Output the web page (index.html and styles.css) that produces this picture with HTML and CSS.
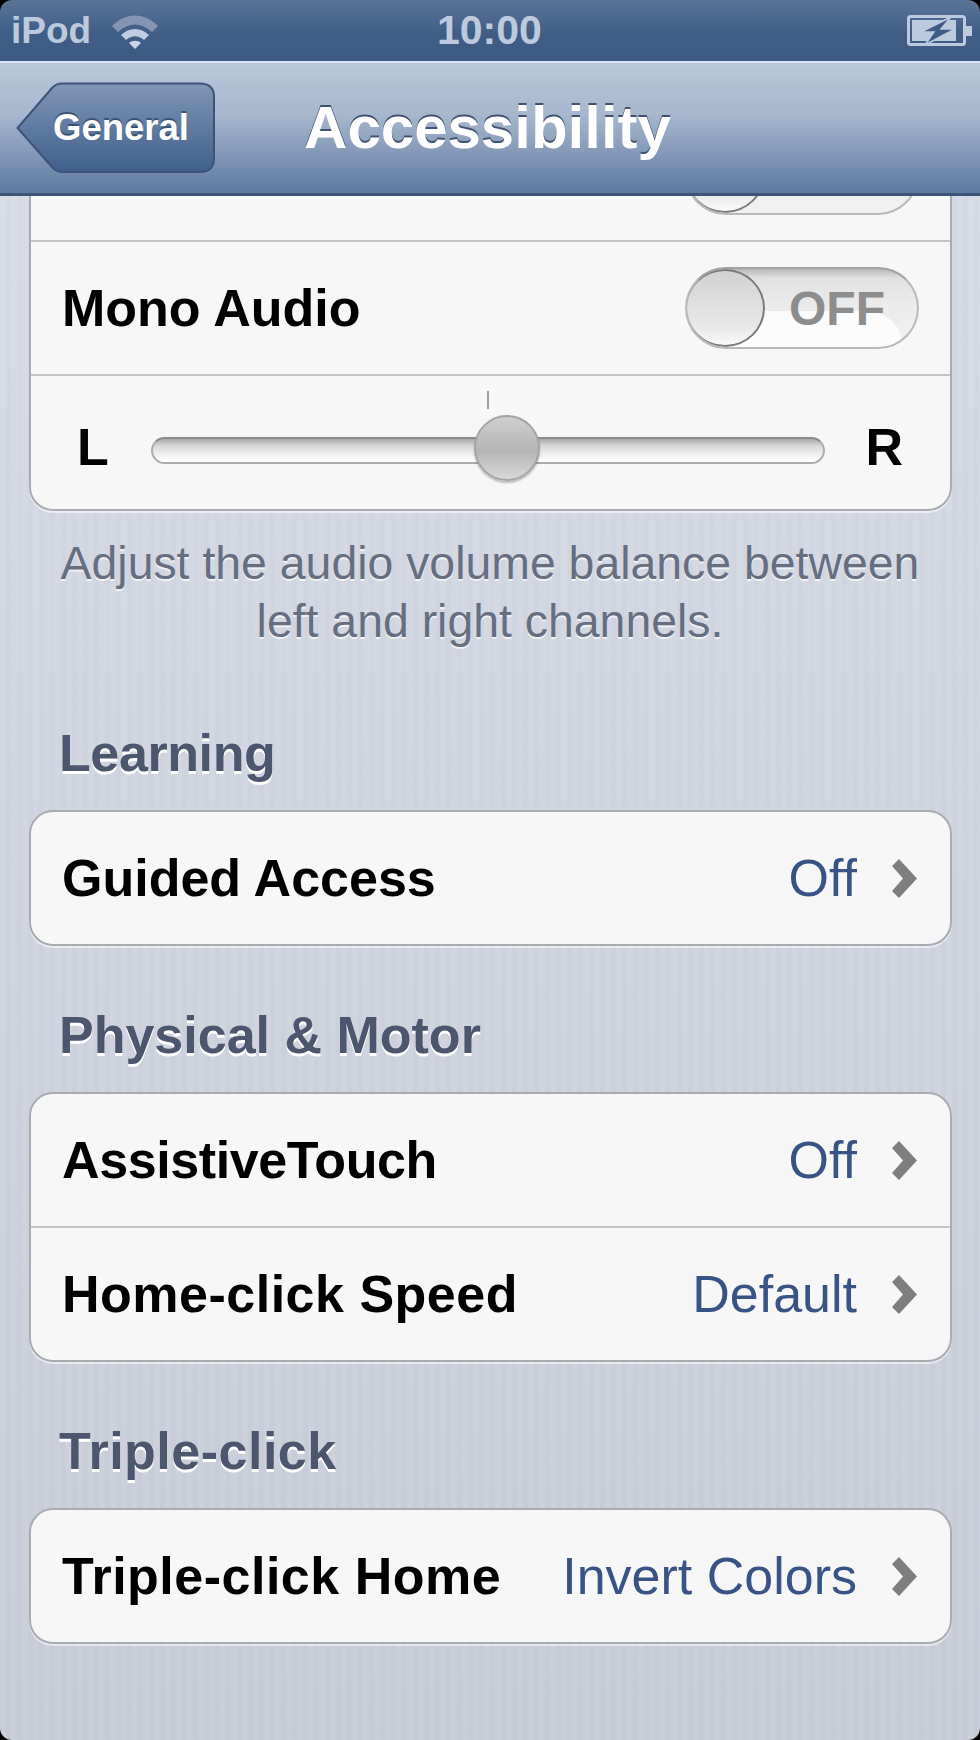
FILE: index.html
```html
<!DOCTYPE html>
<html lang="en">
<head>
    <meta charset="UTF-8">
    <title>Accessibility</title>
    <link rel="stylesheet" href="styles.css">
</head>
<body>
<div class="phone">
    <div class="status">
        <div class="status_left">
            <span class="carrier">iPod</span>
            <svg class="wifi" width="48" height="36" viewBox="0 0 48 36">
                <path d="M1 12 C14 -2 34 -2 47 12 L41 18 C30 8 18 8 7 18 Z" fill="#8295b1"/>
                <path d="M10 21 C18 13 30 13 38 21 L33 26 C27 21 21 21 15 26 Z" fill="#c0cce0"/>
                <path d="M18 29 C21 26 27 26 30 29 L24 35 Z" fill="#c9d4e6"/>
            </svg>
        </div>
        <span class="clock">10:00</span>
        <svg class="battery" width="66" height="32" viewBox="0 0 66 32">
            <rect x="1.5" y="1.5" width="56" height="28" rx="2" fill="none" stroke="#bccadd" stroke-width="3"/>
            <rect x="5" y="5" width="44" height="21" fill="#bccadd"/>
            <rect x="59" y="11" width="6" height="10" fill="#bccadd"/>
            <path d="M44 2 L14 17 L27 17 L18 30 L48 14 L34 14 Z" fill="#3f5c86" stroke="#bccadd" stroke-width="1.5"/>
        </svg>
    </div>

    <div class="navbar">
        <a class="back_btn" href="javascript:;">
            <svg class="back_shape" width="200" height="92" viewBox="0 0 200 92">
                <defs>
                    <linearGradient id="backFill" x1="0" y1="0" x2="0" y2="1">
                        <stop offset="0" stop-color="#8096b4"/>
                        <stop offset="0.5" stop-color="#5f7ba0"/>
                        <stop offset="1" stop-color="#3f5f8c"/>
                    </linearGradient>
                </defs>
                <path d="M1.5 46 L36 6 Q40 1.5 46 1.5 L184 1.5 Q198 1.5 198 15 L198 76 Q198 90 184 90 L46 90 Q40 90 36 85 Z" fill="url(#backFill)" stroke="#3d5478" stroke-width="2"/>
            </svg>
            <span class="back_text">General</span>
        </a>
        <h1 class="title">Accessibility</h1>
    </div>

    <div class="scroll">
        <div class="group group_top">
            <div class="row">
                <span class="switch"><span class="knob"></span></span>
            </div>
            <div class="row">
                <span class="label">Mono Audio</span>
                <span class="switch"><i class="gloss"></i><span class="knob"></span><span class="off">OFF</span></span>
            </div>
            <div class="row balance">
                <span class="label">L</span>
                <div class="track">
                    <i class="tick"></i>
                    <i class="thumb"></i>
                </div>
                <span class="label">R</span>
            </div>
        </div>
        <p class="note">Adjust the audio volume balance between<br>left and right channels.</p>

        <h2 class="section first tight">Learning</h2>
        <div class="group">
            <div class="row">
                <span class="label">Guided Access</span>
                <span class="value">Off</span>
                <svg class="arrow" width="25" height="39" viewBox="0 0 25 39"><polygon points="0,7 7,0 25,19.5 7,39 0,32 11,19.5"/></svg>
            </div>
        </div>

        <h2 class="section">Physical &amp; Motor</h2>
        <div class="group">
            <div class="row">
                <span class="label tight">AssistiveTouch</span>
                <span class="value">Off</span>
                <svg class="arrow" width="25" height="39" viewBox="0 0 25 39"><polygon points="0,7 7,0 25,19.5 7,39 0,32 11,19.5"/></svg>
            </div>
            <div class="row">
                <span class="label wide">Home-click Speed</span>
                <span class="value">Default</span>
                <svg class="arrow" width="25" height="39" viewBox="0 0 25 39"><polygon points="0,7 7,0 25,19.5 7,39 0,32 11,19.5"/></svg>
            </div>
        </div>

        <h2 class="section wide">Triple-click</h2>
        <div class="group">
            <div class="row">
                <span class="label wide">Triple-click Home</span>
                <span class="value">Invert Colors</span>
                <svg class="arrow" width="25" height="39" viewBox="0 0 25 39"><polygon points="0,7 7,0 25,19.5 7,39 0,32 11,19.5"/></svg>
            </div>
        </div>
    </div>
</div>
</body>
</html>
```

FILE: styles.css
```css
*{margin:0;padding:0;box-sizing:border-box;}
a{text-decoration:none;}
body{background:#000;font-family:"Liberation Sans",Arial,sans-serif;}

.phone{width:980px;height:1740px;border-radius:12px;overflow:hidden;display:flex;flex-direction:column;}

/* status bar */
.status{height:61px;flex:none;display:flex;align-items:center;justify-content:space-between;padding:0 7px 0 11px;position:relative;background:linear-gradient(#5a7597,#405d86 55%,#3d5a83);color:#bccadd;font-weight:bold;}
.status_left{display:flex;align-items:center;gap:20px;}
.carrier{font-size:37px;}
.wifi{margin-top:2px;}
.clock{font-size:41px;position:absolute;left:437px;top:7px;}

/* nav bar */
.navbar{height:135px;flex:none;position:relative;z-index:2;display:grid;grid-template-columns:1fr auto 1fr;align-items:center;padding:0 16px;border-top:2px solid #d6e3ee;border-bottom:3px solid #3b5479;background:linear-gradient(#b9c8da,#a6b7ce 40%,#7f96b5 72%,#5d799f);}
.back_btn{width:200px;height:92px;position:relative;display:flex;align-items:center;justify-content:flex-end;padding-right:27px;}
.back_shape{position:absolute;left:0;top:0;}
.back_text{position:relative;font-size:36.5px;font-weight:bold;color:#fff;text-shadow:0 -2px 0 #3b5273;}
.title{font-size:60px;font-weight:bold;color:#fff;text-shadow:0 -2px 0 #3f5270;margin:-2px 5px 0 0;}

/* content */
.scroll{flex:1;overflow:hidden;background:repeating-linear-gradient(90deg,rgba(255,255,255,.035) 0 6px,rgba(90,100,125,.02) 6px 11px),linear-gradient(#d6dbe6,#c7ccd8);}
.group{margin:0 28px 0 29px;background:#f7f7f7;border:2px solid #a9acb3;border-radius:24px;box-shadow:0 2px 0 rgba(255,255,255,.55);}
.group_top{margin-top:-90px;}
.row{height:132px;display:flex;align-items:center;padding:0 33px 0 31px;}
.row + .row{height:134px;border-top:2px solid #c4c4c4;}
.label{font-size:52px;font-weight:bold;color:#000;flex:1;}
.tight{letter-spacing:-.4px;}
.wide{letter-spacing:.5px;}
.value{font-size:52px;color:#385487;margin-right:35px;}
.arrow{fill:#7f7f7f;flex:none;}

/* on/off switch */
.switch{width:234px;height:82px;margin:0 -2px 0 auto;flex:none;border-radius:41px;position:relative;overflow:hidden;display:flex;align-items:center;border:2px solid #b9b9b9;border-top-color:#a2a2a2;background:linear-gradient(#b8b8b8,#e2e2e2 12%,#ececec 50%,#f1f1f1);}
.knob{width:80px;height:78px;flex:none;border-radius:50%;position:relative;left:-2px;border:2px solid #7b7b7b;background:linear-gradient(#d2d2d2,#e8e8e8 75%,#fafafa);}
.off{font-size:48px;font-weight:bold;color:#8d8d8d;margin-left:22px;position:relative;}
.gloss{position:absolute;left:40px;right:14px;top:42px;bottom:0;border-radius:0 36px 0 0;background:rgba(255,255,255,.8);}

/* balance slider */
.balance{height:135px !important;padding:9px 47px 0 46px;}
.balance .label{flex:none;}
.track{flex:1;height:27px;margin:6px 40px 0 42px;border-radius:14px;position:relative;border:2px solid #acacac;border-top-color:#8a8a8a;background:linear-gradient(#a9a9a9,#d8d8d8 30%,#f2f2f2 70%,#fff);}
.tick{position:absolute;left:334px;top:-48px;width:2px;height:18px;background:#a0a0a0;}
.thumb{position:absolute;left:321px;top:-24px;width:66px;height:66px;border-radius:50%;border:2px solid #a4a4a4;background:linear-gradient(#cfcfcf,#b5b5b5 55%,#d8d8d8);box-shadow:0 2px 2px rgba(0,0,0,.25);}

/* captions */
.note{padding-top:23px;font-size:46.4px;line-height:58px;text-align:center;color:#666e81;text-shadow:0 2px 0 rgba(255,255,255,.7);}
.section{margin:59px 0 27px 59px;font-size:52px;line-height:60px;font-weight:bold;color:#4d566f;text-shadow:0 3px 0 #fff;}
.section.first{margin-top:73px;}
```
